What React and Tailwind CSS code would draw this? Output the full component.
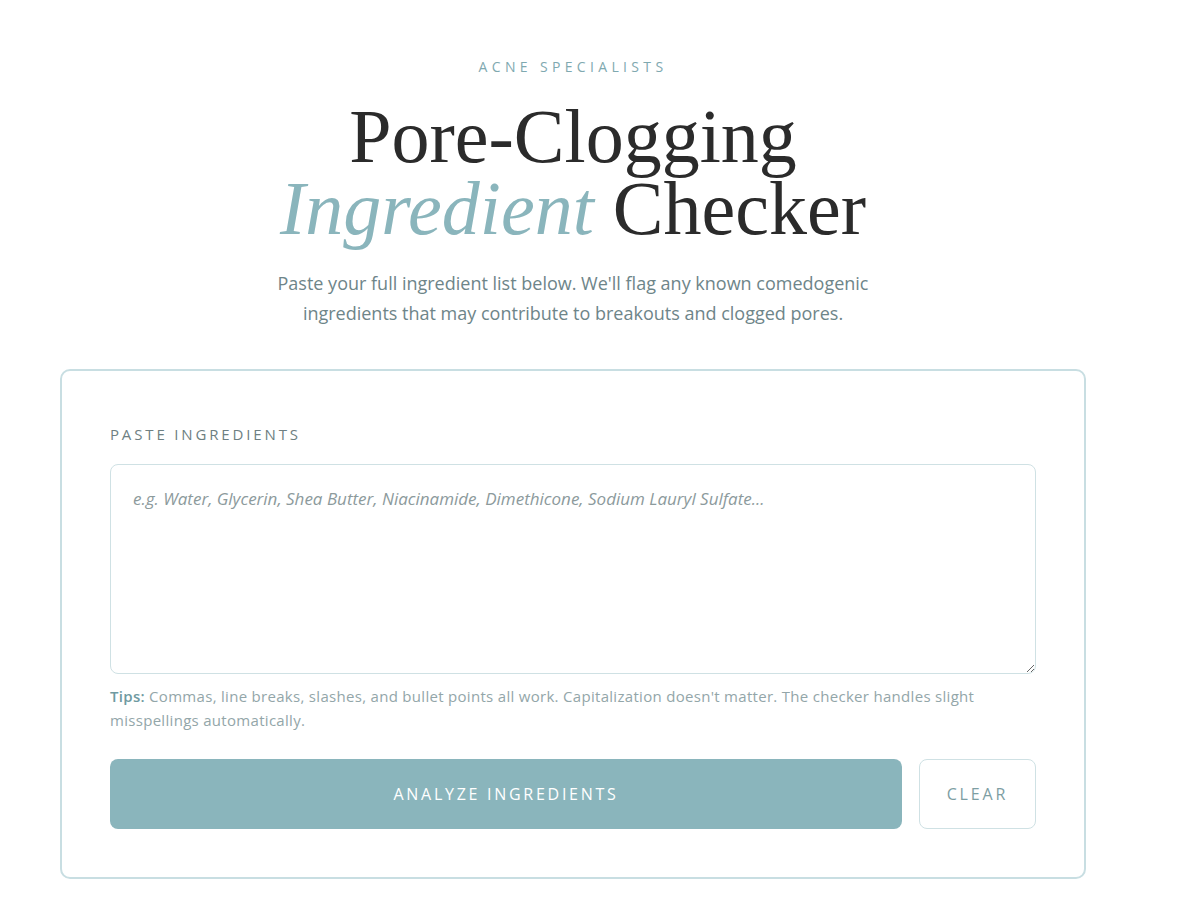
import React, { useState } from 'react';

const App = () => {
  const [text, setText] = useState('');

  return (
    <div className="min-h-screen bg-white" style={{ fontFamily: '"Open Sans", Lato, sans-serif' }}>
      <div className="w-[1146px] px-[60px] pt-[58px] pb-10">
        {/* Header */}
        <div className="text-center">
          <p className="text-[14px] leading-[18px] tracking-[0.31em] text-[#7fa9b0] uppercase">
            Acne Specialists
          </p>
          <h1
            className="mt-[24px] text-[76px] leading-[72px] text-[#2b2b2b]"
            style={{ fontFamily: '"Liberation Serif", "DejaVu Serif", serif' }}
          >
            Pore-Clogging
            <br />
            <em className="text-[#8ab5bc]">Ingredient</em> Checker
          </h1>
          <p className="mx-auto mt-[24px] max-w-[640px] text-[18px] leading-[30px] text-[#6e8589]">
            Paste your full ingredient list below. We'll flag any known comedogenic
            <br />
            ingredients that may contribute to breakouts and clogged pores.
          </p>
        </div>

        {/* Input card */}
        <div className="mt-[41px] rounded-[10px] border-2 border-[#c8dee2] bg-white px-12 pt-[53px] pb-12">
          <label className="block text-[15px] leading-[20px] tracking-[0.19em] text-[#6e7f82] uppercase">
            Paste Ingredients
          </label>
          <textarea
            value={text}
            onChange={(e) => setText(e.target.value)}
            placeholder="e.g. Water, Glycerin, Shea Butter, Niacinamide, Dimethicone, Sodium Lauryl Sulfate..."
            className="mt-[20px] block h-[210px] w-full resize-y rounded-[8px] border-[1.5px] border-[#cfe1e4] px-[22px] py-[22px] text-[17px] leading-[24px] text-[#333] outline-none placeholder:italic placeholder:text-[#8c9a9c]"
          />
          <p className="mt-[10px] text-[15px] leading-[24px] tracking-[0.02em] text-[#93a6a9]">
            <span className="font-semibold text-[#6f9aa1]">Tips:</span> Commas, line breaks, slashes, and bullet points all work. Capitalization doesn't matter. The checker handles slight misspellings automatically.
          </p>
          <div className="mt-[27px] flex gap-[17px]">
            <button className="h-[70px] flex-1 rounded-[8px] bg-[#8ab5bc] text-[16px] tracking-[0.17em] text-white uppercase">
              Analyze Ingredients
            </button>
            <button
              onClick={() => setText('')}
              className="h-[70px] w-[117px] rounded-[8px] border-[1.5px] border-[#cfe1e4] bg-white text-[16px] tracking-[0.18em] text-[#7d9ea3] uppercase"
            >
              Clear
            </button>
          </div>
        </div>
      </div>
    </div>
  );
};

export default App;
